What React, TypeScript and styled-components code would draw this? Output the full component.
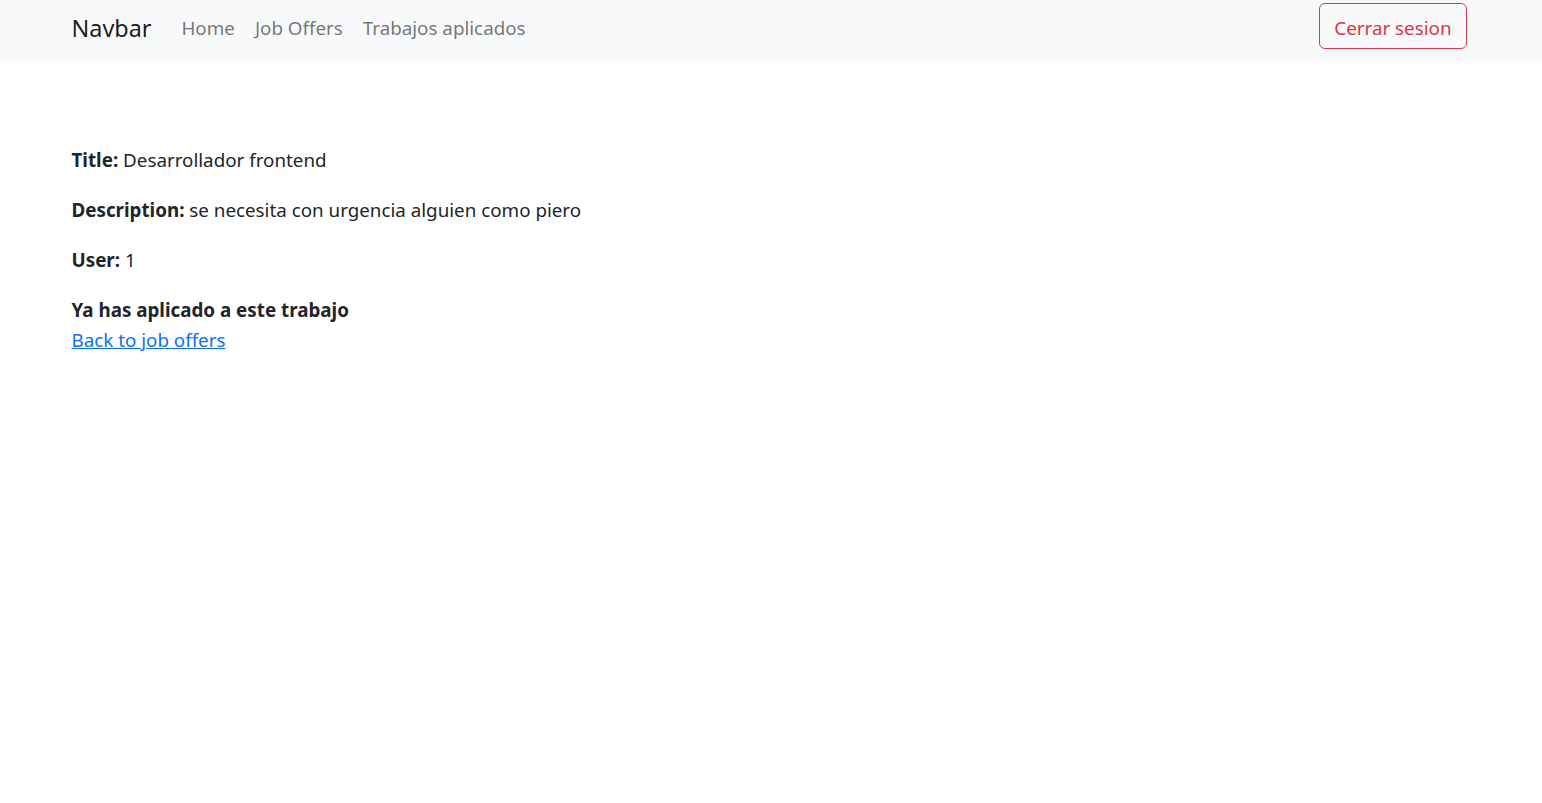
import React from "react";
import styled, { createGlobalStyle } from "styled-components";

const Global = createGlobalStyle`
  * { box-sizing: border-box; }
  html, body { margin: 0; padding: 0; background: #fff; }
  body {
    font-family: "Noto Sans", "Open Sans", sans-serif;
    font-size: 18.8px;
    line-height: 30px;
    color: #212529;
  }
`;

const Nav = styled.nav`
  background: #f8f9fa;
  height: 61px;
  padding: 3px 0 12px;
`;

const Container = styled.div`
  max-width: 1425px;
  margin: 0 auto;
  padding: 0 17px 0 13px;
  height: 100%;
  display: flex;
  align-items: center;
`;

const Brand = styled.a`
  font-size: 23.4px;
  line-height: 37px;
  color: rgba(0, 0, 0, 0.9);
  text-decoration: none;
  margin-right: 20px;
  position: relative;
  top: 2px;
`;

const Links = styled.ul`
  list-style: none;
  display: flex;
  margin: 0;
  padding: 0;
  flex: 1;
  position: relative;
  top: 2px;
`;

const NavLink = styled.a`
  display: block;
  padding: 0 10px;
  color: rgba(0, 0, 0, 0.55);
  text-decoration: none;
`;

const LogoutButton = styled.button`
  font-family: inherit;
  font-size: 18.8px;
  line-height: 30px;
  height: 46px;
  padding: 3px 14px 0;
  color: #dc3545;
  background: transparent;
  border: 1px solid #dc3545;
  border-radius: 6px;
  cursor: pointer;
`;

const Main = styled.main`
  max-width: 1425px;
  margin: 0 auto;
  padding: 84px 17px 0 13px;
`;

const Field = styled.p`
  margin: 0 0 20px;
`;

const Notice = styled.div`
  font-weight: 700;
`;

const BackLink = styled.a`
  color: #0d6efd;
  text-decoration: underline;
`;

export default function App() {
  return (
    <>
      <Global />
      <Nav>
        <Container>
          <Brand href="#">Navbar</Brand>
          <Links>
            <li><NavLink href="#">Home</NavLink></li>
            <li><NavLink href="#">Job Offers</NavLink></li>
            <li><NavLink href="#">Trabajos aplicados</NavLink></li>
          </Links>
          <LogoutButton>Cerrar sesion</LogoutButton>
        </Container>
      </Nav>
      <Main>
        <Field><strong>Title:</strong> Desarrollador frontend</Field>
        <Field><strong>Description:</strong> se necesita con urgencia alguien como piero</Field>
        <Field><strong>User:</strong> 1</Field>
        <Notice>Ya has aplicado a este trabajo</Notice>
        <BackLink href="#">Back to job offers</BackLink>
      </Main>
    </>
  );
}
